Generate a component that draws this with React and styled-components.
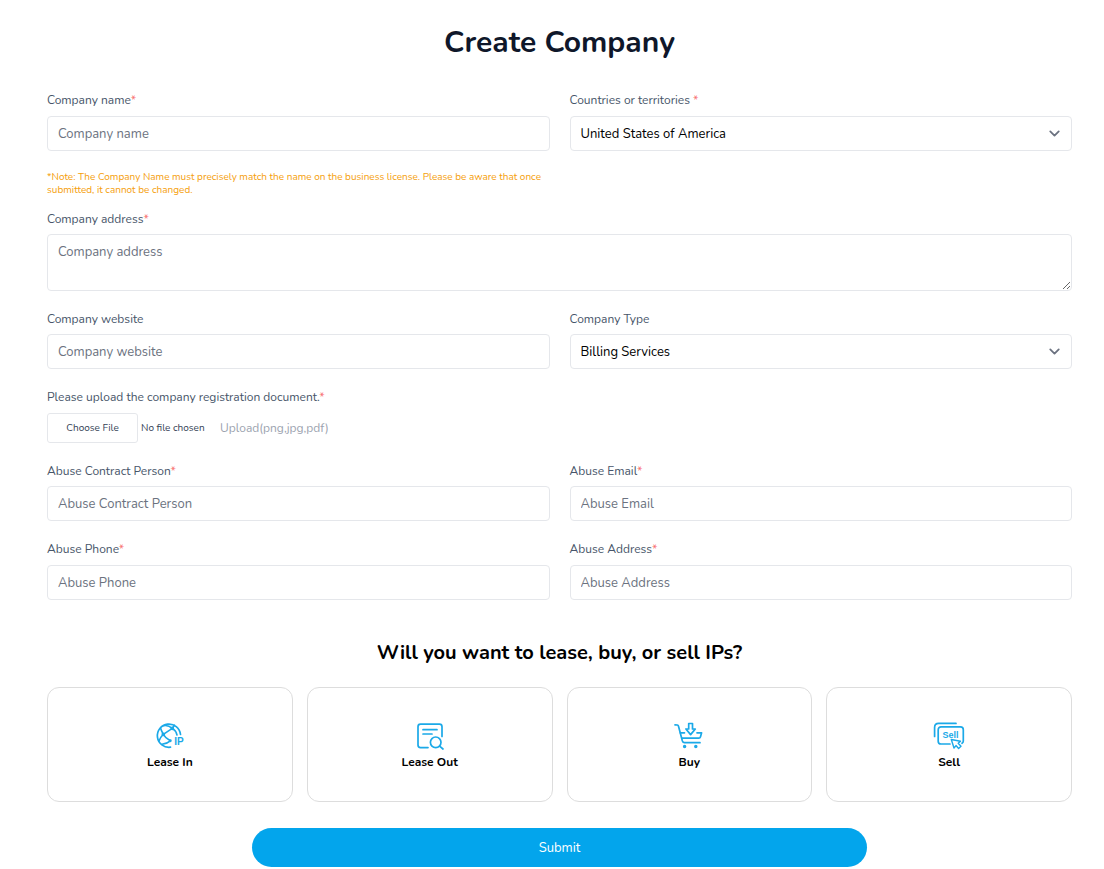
import styled, { createGlobalStyle } from 'styled-components';
import { ChevronDown } from 'lucide-react';

const GlobalStyle = createGlobalStyle`
  *, *::before, *::after {
    box-sizing: border-box;
  }
  body {
    margin: 0;
    background-color: #fff;
  }
  body, button, input, select, textarea {
    font-family: Nunito, Lato, 'Open Sans', sans-serif;
  }
`;

const Page = styled.main`
  padding: 25px 32px 0 47px;
`;

const Title = styled.h1`
  margin: 0 0 31px;
  font-size: 30px;
  line-height: 36px;
  font-weight: 700;
  text-align: center;
  color: #0f172a;
`;

const Row = styled.div`
  display: grid;
  grid-template-columns: repeat(${(props) => props.$columns || 1}, 1fr);
  column-gap: 20px;
  align-items: start;
  margin-bottom: ${(props) => (props.$tight ? '14px' : '20px')};
`;

const Field = styled.div`
  display: flex;
  flex-direction: column;
  min-width: 0;
`;

const Label = styled.label`
  margin-bottom: ${(props) => (props.$spaced ? '8px' : '7px')};
  font-size: 12px;
  line-height: 16px;
  color: #475569;
`;

const Required = styled.span`
  color: #f87171;
`;

const Input = styled.input`
  width: 100%;
  height: 35px;
  padding: 0 10px;
  border: 1px solid #e5e7eb;
  border-radius: 4px;
  background-color: #fff;
  font-size: 13px;
  line-height: 20px;
  color: #000;
  &::placeholder {
    color: #6b7280;
    opacity: 1;
  }
  &:focus {
    outline: none;
    border-color: #03a5ec;
  }
`;

const TextArea = styled(Input)`
  display: block;
  height: 57px;
  padding: 7px 10px;
  resize: vertical;
`;

const SelectWrap = styled.div`
  position: relative;
  color: #6b7280;
  svg {
    position: absolute;
    top: 9px;
    right: 9px;
    pointer-events: none;
  }
`;

const Select = styled(Input)`
  appearance: none;
  padding-right: 32px;
`;

const Note = styled.p`
  margin: 20px 0 0;
  font-size: 10px;
  line-height: 13px;
  color: #f59e0b;
`;

const FileRow = styled.div`
  display: flex;
  align-items: center;
  gap: 12px;
  height: 31px;
`;

const FileInput = styled.input`
  width: 161px;
  font-size: 10px;
  color: #334155;
  &::file-selector-button {
    width: 91px;
    height: 30px;
    margin: 0 3px 0 0;
    padding: 0;
    border: 1px solid #e5e7eb;
    border-radius: 3px;
    background-color: #fff;
    font-family: inherit;
    font-size: 10px;
    color: #334155;
    cursor: pointer;
  }
`;

const FileHint = styled.span`
  font-size: 12px;
  line-height: 16px;
  color: #9ca3af;
`;

const Question = styled.h2`
  margin: 40px 0 21px;
  font-size: 20px;
  line-height: 26px;
  font-weight: 700;
  text-align: center;
  color: #000;
`;

const Options = styled.div`
  display: grid;
  grid-template-columns: repeat(4, 1fr);
  gap: 14px;
`;

const Option = styled.button`
  display: flex;
  flex-direction: column;
  align-items: center;
  gap: 1px;
  padding: 32px 16px 29px;
  border: 1px solid #ddd;
  border-radius: 12px;
  background-color: #fff;
  font-size: 12px;
  line-height: 19px;
  font-weight: 700;
  color: #000;
  cursor: pointer;
  &:hover {
    border-color: #03a5ec;
  }
`;

const Icon = styled.svg.attrs({
  width: 32,
  height: 32,
  viewBox: '0 0 32 32',
  'aria-hidden': true,
})`
  fill: none;
  stroke: #1ba9e8;
  stroke-width: 1.7;
  stroke-linecap: round;
  stroke-linejoin: round;
  text {
    fill: #1ba9e8;
    stroke: none;
    font-family: 'Liberation Sans', sans-serif;
    font-weight: 700;
  }
`;

const Submit = styled.button`
  display: block;
  width: 60%;
  height: 39px;
  margin: 26px auto 0;
  border: none;
  border-radius: 20px;
  background-color: #03a5ec;
  font-size: 13px;
  color: #fff;
  cursor: pointer;
`;

const LeaseInIcon = () => (
  <Icon>
    <path d='M26.5 14.5 A11.6 11.6 0 1 0 16.5 27.2' />
    <path
      strokeWidth='1.6'
      d='M9.3 14.3 L18.3 8.3 L20.5 5.2 M18.3 8.3 C15 5.6 12 5.2 9.5 5.8 M18.3 8.3 C21 10 22.3 12 23 15 M9.3 14.3 C7.8 11.5 7 9.8 6.6 8.2 M9.3 14.3 C7.2 16.5 5.6 18.6 5 21 M9.3 14.3 C10.8 17 13 19 16.3 20.8 M16.3 20.8 C14 23 11.5 23.8 8 24.2'
    />
    <circle cx='9.3' cy='14.3' r='1' />
    <circle cx='18.3' cy='8.3' r='1' />
    <circle cx='16.3' cy='20.8' r='0.6' />
    <text x='20.2' y='25' fontSize='10'>
      IP
    </text>
  </Icon>
);

const LeaseOutIcon = () => (
  <Icon>
    <path d='M14 27.6 H6.5 a2.5 2.5 0 0 1 -2.5 -2.5 V6.7 a2.5 2.5 0 0 1 2.5 -2.5 H25.5 a2.5 2.5 0 0 1 2.5 2.5 V16.5' />
    <path d='M9 9.7 H23 M9 14 H18' />
    <circle cx='21.7' cy='22.3' r='5.3' />
    <path d='M25.6 26.2 L29 29' />
  </Icon>
);

const BuyIcon = () => (
  <Icon>
    <path d='M2 4.8 L4.3 5 Q5.2 5.2 5.5 6.2 L9.4 21 Q9.9 22.7 11.5 22.7 H27' />
    <path d='M7.3 12.8 H11.5 M24 12.8 H28.6 L27.5 16.7 Q27.1 18.2 25.8 18.2 H8.8' />
    <path d='M15.7 3.5 H19.5 V9 H22.3 L17.6 14.6 L12.9 9 H15.7 Z' />
    <circle cx='11.6' cy='26.6' r='0.9' />
    <circle cx='22.8' cy='26.6' r='0.9' />
  </Icon>
);

const SellIcon = () => (
  <Icon>
    <path d='M1.6 16.5 V7.5 Q1.6 3.4 5.7 3.4 H23' />
    <path d='M17 24 H8 a2.8 2.8 0 0 1 -2.8 -2.8 V9.7 a2.8 2.8 0 0 1 2.8 -2.8 H27.5 a2.8 2.8 0 0 1 2.8 2.8 V21 Q30.3 22.5 29 23.3' />
    <text x='9.4' y='17.7' fontSize='9'>
      Sell
    </text>
    <path
      strokeWidth='1.4'
      d='M18.3 19.5 L27.5 21.2 L25.2 23.3 L28 26.2 L25.6 28.4 L23 25.6 L21 28 Z'
    />
  </Icon>
);

const options = [
  { name: 'Lease In', icon: LeaseInIcon },
  { name: 'Lease Out', icon: LeaseOutIcon },
  { name: 'Buy', icon: BuyIcon },
  { name: 'Sell', icon: SellIcon },
];

const TextField = ({
  id,
  label,
  required,
  spaced,
  type = 'text',
  children,
}) => (
  <Field>
    <Label htmlFor={id} $spaced={spaced}>
      {label}
      {required && <Required>*</Required>}
    </Label>
    <Input id={id} name={id} type={type} placeholder={label} />
    {children}
  </Field>
);

const SelectField = ({ id, label, required, spaced, value }) => (
  <Field>
    <Label htmlFor={id} $spaced={spaced}>
      {label}
      {required && <Required> *</Required>}
    </Label>
    <SelectWrap>
      <Select as='select' id={id} name={id} defaultValue={value}>
        <option value={value}>{value}</option>
      </Select>
      <ChevronDown size={17} strokeWidth={2.5} />
    </SelectWrap>
  </Field>
);

const App = () => {
  return (
    <>
      <GlobalStyle />
      <Page>
        <Title>Create Company</Title>
        <form onSubmit={(e) => e.preventDefault()}>
          <Row $columns={2} $tight>
            <TextField id='name' label='Company name' required spaced>
              <Note>
                *Note: The Company Name must precisely match the name on the
                business license. Please be aware that once submitted, it cannot
                be changed.
              </Note>
            </TextField>
            <SelectField
              id='country'
              label='Countries or territories'
              required
              spaced
              value='United States of America'
            />
          </Row>
          <Row>
            <Field>
              <Label htmlFor='address'>
                Company address<Required>*</Required>
              </Label>
              <TextArea
                as='textarea'
                id='address'
                name='address'
                placeholder='Company address'
              />
            </Field>
          </Row>
          <Row $columns={2}>
            <TextField id='website' label='Company website' />
            <SelectField
              id='type'
              label='Company Type'
              value='Billing Services'
            />
          </Row>
          <Row>
            <Field>
              <Label htmlFor='document'>
                Please upload the company registration document.
                <Required>*</Required>
              </Label>
              <FileRow>
                <FileInput
                  id='document'
                  name='document'
                  type='file'
                  accept='.png,.jpg,.pdf'
                />
                <FileHint>Upload(png,jpg,pdf)</FileHint>
              </FileRow>
            </Field>
          </Row>
          <Row $columns={2}>
            <TextField id='person' label='Abuse Contract Person' required />
            <TextField id='email' label='Abuse Email' type='email' required />
          </Row>
          <Row $columns={2}>
            <TextField
              id='phone'
              label='Abuse Phone'
              type='tel'
              required
              spaced
            />
            <TextField
              id='abuse-address'
              label='Abuse Address'
              required
              spaced
            />
          </Row>

          <Question>Will you want to lease, buy, or sell IPs?</Question>
          <Options>
            {options.map(({ name, icon: OptionIcon }) => (
              <Option type='button' key={name}>
                <OptionIcon />
                {name}
              </Option>
            ))}
          </Options>
          <Submit type='submit'>Submit</Submit>
        </form>
      </Page>
    </>
  );
};

export default App;
